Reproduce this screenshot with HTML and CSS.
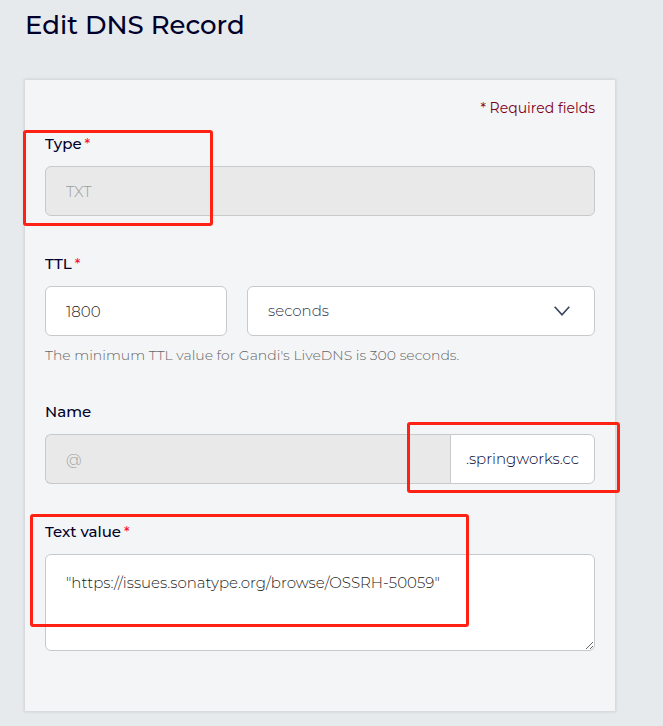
FILE: index.html
```html
<!DOCTYPE html>
<html lang="en">
<head>
<meta charset="utf-8">
<meta name="viewport" content="width=device-width, initial-scale=1">
<title>Edit DNS Record</title>
<link rel="stylesheet" href="styles.css">
</head>
<body>
<main class="page">
  <h1 class="title">Edit DNS Record</h1>
  <form class="panel">
    <p class="required-note">* Required fields</p>

    <div class="field">
      <label class="label" for="type">Type<span class="star">*</span></label>
      <input class="control" id="type" type="text" value="TXT" disabled>
      <span class="mark mark-type"></span>
    </div>

    <div class="field">
      <label class="label" for="ttl">TTL<span class="star">*</span></label>
      <div class="ttl-row">
        <input class="control" id="ttl" type="text" value="1800">
        <div class="select-wrap">
          <select class="control select" aria-label="TTL unit">
            <option>seconds</option>
          </select>
          <svg class="chevron" viewBox="0 0 16 10" aria-hidden="true"><path d="M0.700 0.700L8 8.700L15.300 0.700"/></svg>
        </div>
      </div>
      <p class="hint">The minimum TTL value for Gandi's LiveDNS is 300 seconds.</p>
    </div>

    <div class="field">
      <label class="label" for="name">Name</label>
      <div class="name-row">
        <input class="control name-input" id="name" type="text" value="@" disabled>
        <span class="suffix">.springworks.cc</span>
        <span class="mark mark-domain"></span>
      </div>
    </div>

    <div class="field">
      <label class="label" for="value">Text value<span class="star">*</span></label>
      <textarea class="control textarea" id="value" spellcheck="false">"https://issues.sonatype.org/browse/OSSRH-50059"</textarea>
      <span class="mark mark-value"></span>
    </div>
  </form>
</main>
</body>
</html>
```
FILE: styles.css
```css
* {
  box-sizing: border-box;
}

body {
  margin: 0;
  background: #e6eaed;
  color: #00002a;
  font-family: Montserrat, Inter, sans-serif;
  font-size: 15px;
  line-height: 22px;
}

.page {
  padding: 9px 48px 15px 25px;
}

.title {
  margin: 0 0 39px;
  font-size: 26px;
  line-height: 32px;
  font-weight: 500;
}

.panel {
  display: flex;
  flex-direction: column;
  gap: 36px;
  padding: 16px 20px 60px;
  background: #f4f5f7;
  box-shadow: 0 0 3px 1px rgba(0, 0, 0, 0.1);
}

.required-note {
  margin: 0 0 -24px;
  color: #7d0018;
  font-size: 14px;
  line-height: 24px;
  text-align: right;
}

.field {
  position: relative;
}

.label {
  display: block;
  margin-bottom: 10px;
  line-height: 24px;
  font-weight: 500;
}

.star {
  margin-left: 3px;
  color: #ff1038;
  font-size: 14px;
}

.control {
  display: block;
  width: 100%;
  height: 50px;
  margin: 0;
  padding: 0 20px;
  border: 1px solid #c8c9ca;
  border-radius: 6px;
  background: #fff;
  color: #222;
  font: inherit;
  font-weight: 300;
  outline: none;
}

.control:disabled {
  background: #e9e9e9;
  color: #9c9c9c;
  opacity: 1;
}

.ttl-row {
  display: grid;
  grid-template-columns: 182fr 348fr;
  gap: 20px;
}

.select-wrap {
  position: relative;
}

.select {
  appearance: none;
  color: #2b3448;
}

.chevron {
  position: absolute;
  top: 20px;
  right: 25px;
  width: 16px;
  height: 10px;
  fill: none;
  stroke: #3b475c;
  stroke-width: 1.7;
  pointer-events: none;
}

.hint {
  margin: 10px 0 0;
  color: #666;
  font-size: 14px;
  line-height: 18px;
  font-weight: 300;
}

.name-row {
  position: relative;
  display: flex;
}

.name-input {
  flex: 1;
  min-width: 0;
  border-right: 0;
  border-radius: 6px 0 0 6px;
}

.suffix {
  display: flex;
  align-items: center;
  height: 50px;
  padding: 0 15px;
  border: 1px solid #c8c9ca;
  border-radius: 0 6px 6px 0;
  background: #fff;
  font-weight: 300;
}

.textarea {
  height: 97px;
  padding: 17px 20px;
  resize: both;
}

.mark {
  position: absolute;
  border: 3px solid #ff2113;
  border-radius: 3px;
  pointer-events: none;
}

.mark-type {
  top: -2px;
  left: -22px;
  width: 190px;
  height: 96px;
}

.mark-domain {
  top: -12px;
  right: -25px;
  width: 213px;
  height: 71px;
}

.mark-value {
  top: -6px;
  left: -15px;
  width: 439px;
  height: 113px;
}
```
